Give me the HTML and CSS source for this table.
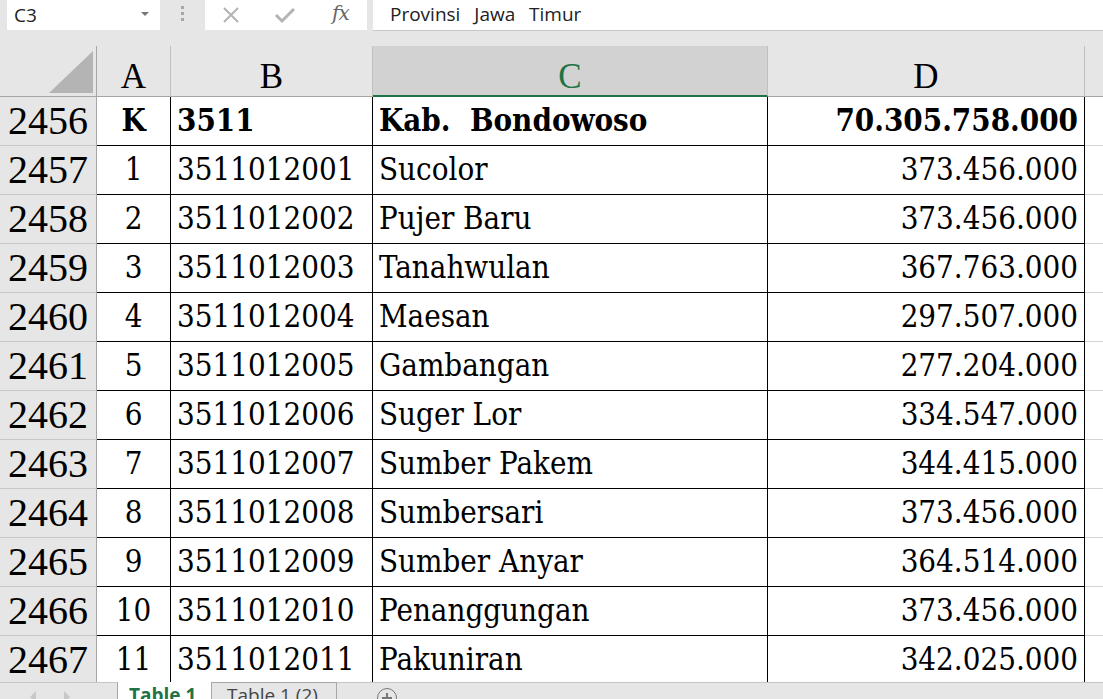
FILE: index.html
```html
<!DOCTYPE html>
<html>
<head>
<meta charset="utf-8">
<link rel="stylesheet" href="styles.css">
</head>
<body>
<div class="app">
  <div class="fbar">
    <div class="namebox"><span class="nb-text">C3</span><span class="caret"></span></div>
    <div class="grip"><i></i><i></i><i></i></div>
    <div class="fbtns">
      <svg class="ic-x" width="18" height="18" viewBox="0 0 18 18"><path d="M2 2 L16 16 M16 2 L2 16" stroke="#b3b3b3" stroke-width="2" fill="none"/></svg>
      <svg class="ic-ok" width="22" height="18" viewBox="0 0 22 18"><path d="M2 9 L8 15 L20 3" stroke="#b3b3b3" stroke-width="3" fill="none"/></svg>
      <span class="fx">fx</span>
    </div>
    <div class="finput">Provinsi&nbsp; Jawa&nbsp; Timur</div>
  </div>
  <div class="band"></div>
  <div class="sheet">
    <div class="ch corner"><svg width="44" height="42" viewBox="0 0 44 42"><polygon points="44,0 44,42 0,42" fill="#b4b4b4"/></svg></div>
    <div class="ch">A</div>
    <div class="ch">B</div>
    <div class="ch sel">C</div>
    <div class="ch">D</div>
    <div class="ch rest"></div>

    <div class="rh">2456</div><div class="c ctr b">K</div><div class="c b">3511</div><div class="c b">Kab.&nbsp; Bondowoso</div><div class="c num b">70.305.758.000</div><div class="c rest"></div>
    <div class="rh">2457</div><div class="c ctr">1</div><div class="c">3511012001</div><div class="c">Sucolor</div><div class="c num">373.456.000</div><div class="c rest"></div>
    <div class="rh">2458</div><div class="c ctr">2</div><div class="c">3511012002</div><div class="c">Pujer Baru</div><div class="c num">373.456.000</div><div class="c rest"></div>
    <div class="rh">2459</div><div class="c ctr">3</div><div class="c">3511012003</div><div class="c">Tanahwulan</div><div class="c num">367.763.000</div><div class="c rest"></div>
    <div class="rh">2460</div><div class="c ctr">4</div><div class="c">3511012004</div><div class="c">Maesan</div><div class="c num">297.507.000</div><div class="c rest"></div>
    <div class="rh">2461</div><div class="c ctr">5</div><div class="c">3511012005</div><div class="c">Gambangan</div><div class="c num">277.204.000</div><div class="c rest"></div>
    <div class="rh">2462</div><div class="c ctr">6</div><div class="c">3511012006</div><div class="c">Suger Lor</div><div class="c num">334.547.000</div><div class="c rest"></div>
    <div class="rh">2463</div><div class="c ctr">7</div><div class="c">3511012007</div><div class="c">Sumber Pakem</div><div class="c num">344.415.000</div><div class="c rest"></div>
    <div class="rh">2464</div><div class="c ctr">8</div><div class="c">3511012008</div><div class="c">Sumbersari</div><div class="c num">373.456.000</div><div class="c rest"></div>
    <div class="rh">2465</div><div class="c ctr">9</div><div class="c">3511012009</div><div class="c">Sumber Anyar</div><div class="c num">364.514.000</div><div class="c rest"></div>
    <div class="rh">2466</div><div class="c ctr">10</div><div class="c">3511012010</div><div class="c">Penanggungan</div><div class="c num">373.456.000</div><div class="c rest"></div>
    <div class="rh">2467</div><div class="c ctr">11</div><div class="c">3511012011</div><div class="c">Pakuniran</div><div class="c num">342.025.000</div><div class="c rest"></div>
  </div>
  <div class="tabs">
    <div class="tnav"><span class="arr l"></span><span class="arr r"></span></div>
    <div class="tab active">Table 1</div>
    <div class="tab">Table 1 (2)</div>
    <div class="tadd"><span class="plus"></span></div>
  </div>
</div>
</body>
</html>
```
FILE: styles.css
```css
html, body { margin: 0; padding: 0; }
body { width: 1103px; height: 699px; overflow: hidden; background: #e6e6e6; }
.app { width: 1103px; height: 699px; display: flex; flex-direction: column; overflow: hidden; }

.fbar { height: 31px; display: flex; align-items: flex-start; background: #e6e6e6; flex: none; }
.namebox { margin-left: 7px; width: 153px; height: 30px; background: #fff; display: flex; align-items: center; justify-content: space-between; box-sizing: border-box; padding: 0 0 0 7px; font-family: "Open Sans", "Noto Sans", sans-serif; font-size: 19px; color: #222; }
.caret { width: 0; height: 0; border-left: 4px solid transparent; border-right: 4px solid transparent; border-top: 4px solid #777; margin-right: 11px; margin-top: -2px; }
.grip { width: 45px; display: flex; flex-direction: column; align-items: center; gap: 3px; padding-top: 6px; }
.grip i { display: block; width: 3px; height: 3px; background: #a6a6a6; }
.fbtns { width: 162px; height: 30px; background: #fff; display: flex; align-items: center; box-sizing: border-box; }
.ic-x { margin-left: 17px; }
.ic-ok { margin-left: 34px; }
.fx { margin-left: 36px; font-family: "DejaVu Serif", serif; font-style: italic; font-size: 20px; color: #666; margin-top: -4px; letter-spacing: -1px; }
.finput { margin-left: 6px; flex: 1; height: 30px; background: #fff; border-bottom: 1px solid #c6c6c6; box-sizing: content-box; padding-left: 17px; font-family: "Open Sans", "Noto Sans", sans-serif; font-size: 19px; color: #222; line-height: 29px; word-spacing: 2px; }

.band { height: 15px; flex: none; background: #e6e6e6; }

.sheet { flex: none; height: 636px; overflow: hidden; display: grid; grid-template-columns: 97px 74px 202px 395px 317px 1fr; grid-template-rows: 51px; grid-auto-rows: 49px; background: #fff; }

.ch { box-sizing: border-box; background: #e6e6e6; border-right: 1px solid #c0c0c0; border-bottom: 1px solid #a6a6a6; font-family: "Liberation Serif", serif; font-size: 35px; line-height: 1; color: #000; display: flex; align-items: flex-end; justify-content: center; padding-bottom: 2px; }
.ch.corner { border-right-color: #a6a6a6; align-items: flex-end; justify-content: flex-end; padding: 0 3px 3px 0; }
.ch.corner svg { display: block; }
.ch.sel { background: #d2d2d2; color: #217346; border-bottom: 2px solid #217346; padding-bottom: 1px; }
.ch.rest { border-right: none; }

.rh { box-sizing: border-box; background: #e6e6e6; border-right: 1px solid #a6a6a6; border-bottom: 1px solid #c8c8c8; font-family: "Liberation Serif", serif; font-size: 40px; color: #000; display: flex; align-items: flex-end; justify-content: center; line-height: 1; padding-bottom: 4px; }

.c { box-sizing: border-box; border-right: 1px solid #000; border-bottom: 1px solid #000; font-family: "DejaVu Serif Condensed", "DejaVu Serif", serif; font-stretch: condensed; font-size: 31px; color: #000; display: flex; align-items: flex-end; padding: 0 6px 9px 6px; line-height: 1; white-space: nowrap; overflow: hidden; }
.c.ctr { justify-content: center; }
.c.num { justify-content: flex-end; }
.c.b { font-weight: bold; }
.c.rest { border-right: none; border-bottom: 1px solid #d4d4d4; }

.tabs { flex: none; height: 17px; display: flex; background: #e6e6e6; font-family: "Open Sans", "Noto Sans", sans-serif; font-size: 19px; line-height: 24px; }
.tnav { width: 118px; border-top: 1px solid #c6c6c6; border-right: 1px solid #a6a6a6; display: flex; gap: 28px; padding: 8px 0 0 30px; box-sizing: border-box; }
.arr { width: 0; height: 0; border-top: 6px solid transparent; border-bottom: 6px solid transparent; }
.arr.l { border-right: 6px solid #c8c8c8; }
.arr.r { border-left: 6px solid #c8c8c8; }
.tab { box-sizing: border-box; white-space: nowrap; padding-top: 1px; }
.tab.active { width: 94px; background: #fff; color: #217346; font-weight: bold; border-right: 1px solid #a6a6a6; padding-left: 11px; }
.tab:not(.active) { width: 125px; color: #444; border-top: 1px solid #a6a6a6; border-right: 1px solid #a6a6a6; padding-left: 15px; padding-top: 0; }
.tadd { flex: 1; border-top: 1px solid #c6c6c6; position: relative; }
.plus { position: absolute; left: 40px; top: 5px; width: 20px; height: 20px; border: 1.5px solid #777; border-radius: 50%; box-sizing: border-box; }
.plus::before, .plus::after { content: ""; position: absolute; background: #777; }
.plus::before { left: 4px; right: 4px; top: 8px; height: 1.5px; }
.plus::after { top: 4px; bottom: 4px; left: 8px; width: 1.5px; }
```
